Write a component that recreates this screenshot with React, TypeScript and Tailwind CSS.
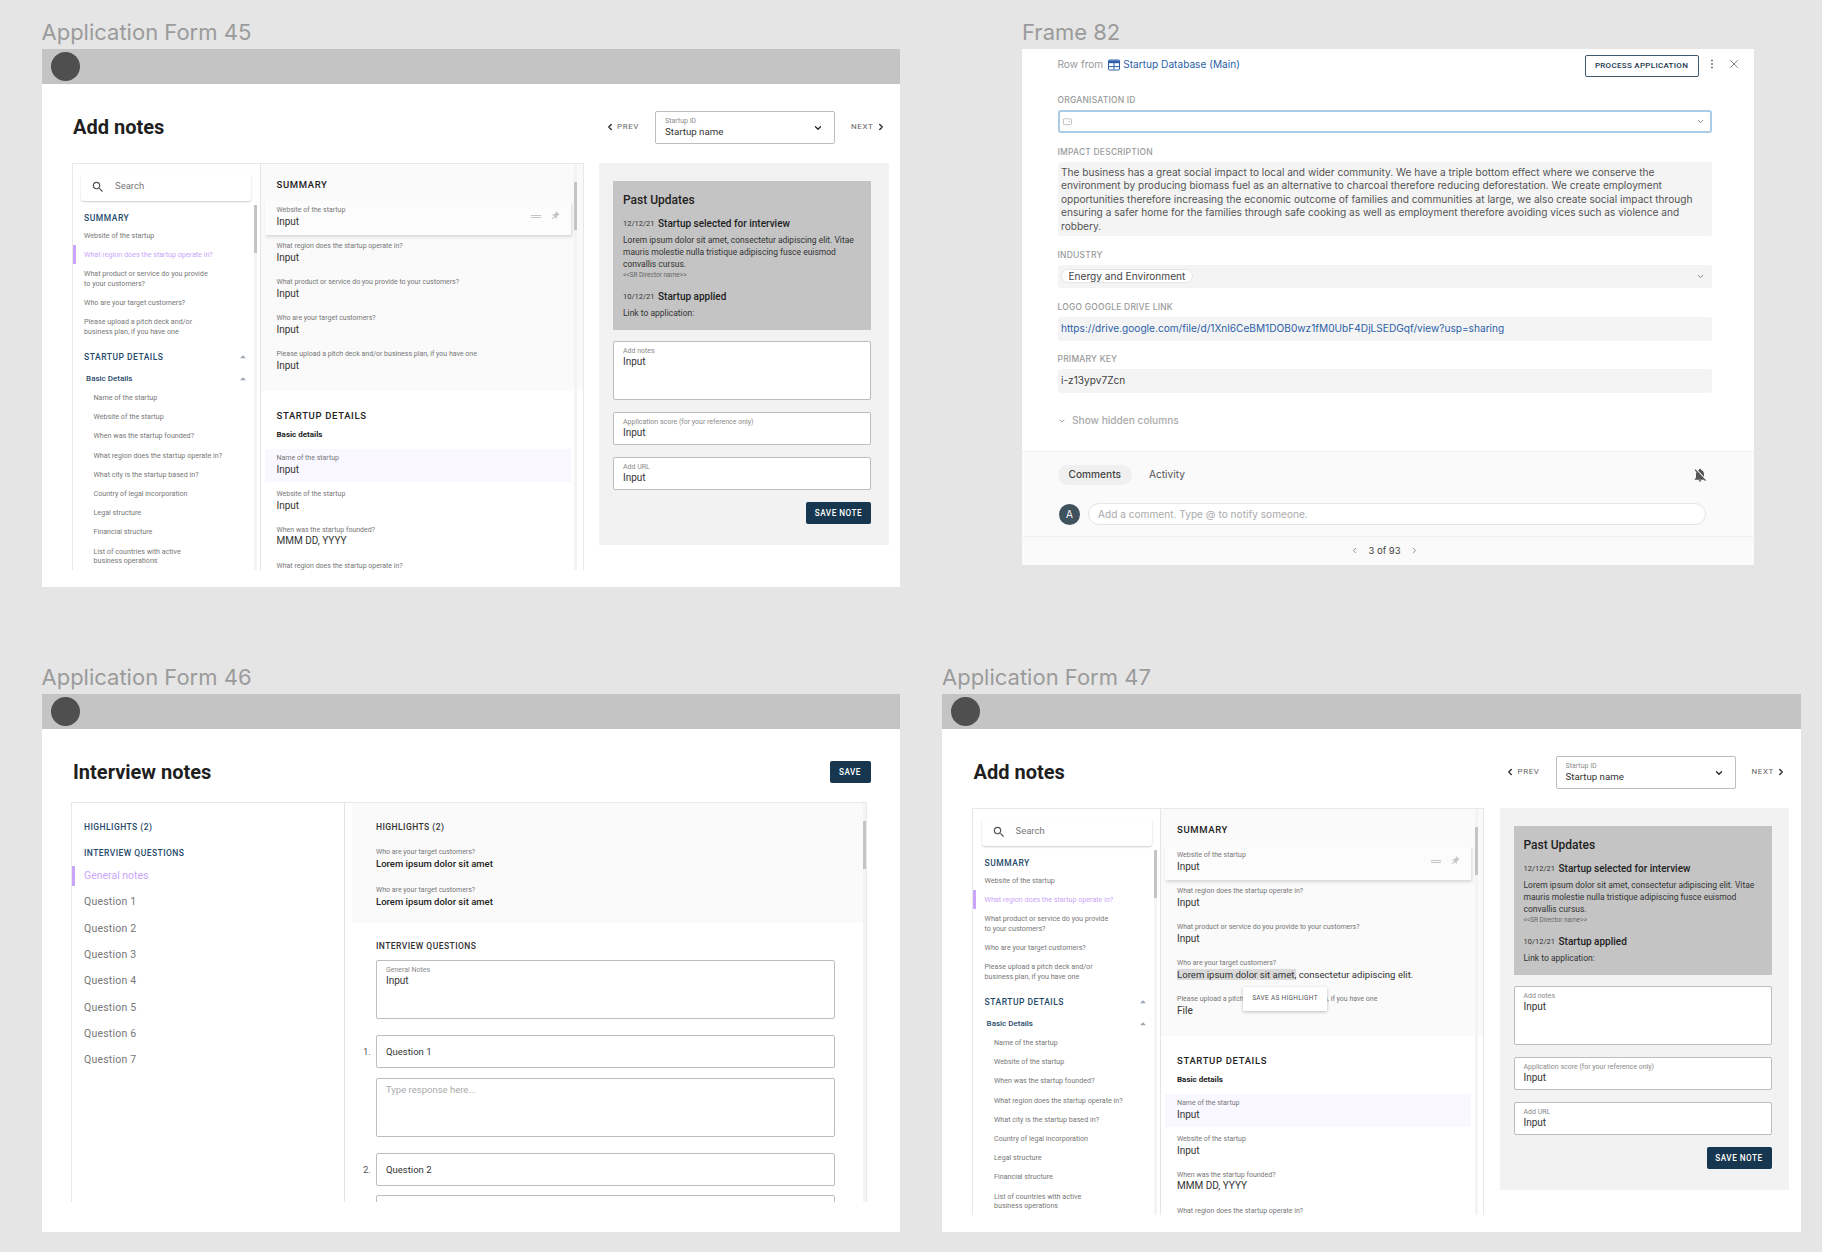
import { ChevronLeft, ChevronRight, ChevronDown, X, EllipsisVertical } from "lucide-react";
import { MdNotificationsOff, MdPushPin, MdArrowDropUp, MdSearch } from "react-icons/md";

const sidebarSummary = [
  "Website of the startup",
  "What region does the startup operate in?",
  "What product or service do you provide\nto your customers?",
  "Who are your target customers?",
  "Please upload a pitch deck and/or\nbusiness plan, if you have one",
];

const sidebarBasics = [
  "Name of the startup",
  "Website of the startup",
  "When was the startup founded?",
  "What region does the startup operate in?",
  "What city is the startup based in?",
  "Country of legal incorporation",
  "Legal structure",
  "Financial structure",
  "List of countries with active\nbusiness operations",
];

const questions = ["Question 1", "Question 2", "Question 3", "Question 4", "Question 5", "Question 6", "Question 7"];

const Frame = ({ title, children }: { title: string; children: React.ReactNode }) => (
  <div>
    <div className="h-[32px] text-[22px] leading-[31px] text-[#9b9b9b] font-['Inter',sans-serif] whitespace-nowrap">{title}</div>
    {children}
  </div>
);

const FormShell = ({ children }: { children: React.ReactNode }) => (
  <div className="w-[858.5px] h-[538px] bg-white overflow-hidden font-['Roboto',sans-serif]">
    <div className="h-[35px] bg-[#c4c4c4] flex items-center pl-[9px]">
      <div className="w-[29px] h-[29px] rounded-full bg-[#4f4f4f]" />
    </div>
    {children}
  </div>
);

const Field = ({ label, value, tall }: { label: string; value: string; tall?: boolean }) => (
  <div className={`border border-[#bdbdbd] rounded-[2px] bg-white px-[9px] pt-[4px] ${tall ? "h-[59px]" : "h-[33px]"}`}>
    <div className="text-[7px] leading-[10px] text-[#8a8a8a]">{label}</div>
    <div className="text-[10px] leading-[12px] text-[#333]">{value}</div>
  </div>
);

const Row = ({ label, value, shadow, tint, children }: { label: string; value: React.ReactNode; shadow?: boolean; tint?: boolean; children?: React.ReactNode }) => (
  <div className={`relative h-[33.6px] ml-[4px] w-[306px] pl-[12px] pt-[4.4px] ${shadow ? "bg-[#fcfcfc] shadow-[1px_2px_3px_rgba(0,0,0,0.14)]" : ""} ${tint ? "bg-[#f9f7ff]" : ""}`}>
    <div className="text-[7px] leading-[10px] text-[#777] whitespace-nowrap">{label}</div>
    <div className="text-[10px] leading-[12px] mt-[0.8px] text-[#333] whitespace-nowrap">{value}</div>
    {children}
  </div>
);

const SideItem = ({ text, active, sub }: { text: string; active?: boolean; sub?: boolean }) => (
  <div className={`relative text-[7.15px] leading-[9.6px] whitespace-pre ${sub ? "pl-[21px]" : "pl-[11.6px]"} ${active ? "text-[#c9a6fb]" : "text-[#777]"}`}>
    {active && <span className="absolute left-0 top-[-4.8px] w-[3px] h-[19.2px] bg-[#c9a6fb]" />}
    {text}
  </div>
);

const Caret = () => <MdArrowDropUp className="absolute right-[10px] top-[-1px] w-[14px] h-[14px] text-[#9aa7b3]" />;

const AddNotes = ({ selecting }: { selecting?: boolean }) => (
  <FormShell>
    <div className="h-[78.5px] pt-[8px] flex items-center pl-[31.5px]">
      <div className="text-[20px] font-bold text-[#1f1f1f]">Add notes</div>
      <div className="ml-auto flex items-center pr-[14.5px]">
        <ChevronLeft className="w-[10px] h-[10px] text-[#333]" strokeWidth={3.5} />
        <span className="ml-[2.5px] text-[8px] tracking-[0.6px] text-[#666]">PREV</span>
        <div className="relative ml-[16px] w-[180px] h-[33px] border border-[#bdbdbd] rounded-[2px] px-[9px] pt-[4px]">
          <div className="text-[7px] leading-[10px] text-[#8a8a8a]">Startup ID</div>
          <div className="text-[9.7px] leading-[12px] text-[#333]">Startup name</div>
          <ChevronDown className="absolute right-[11px] top-[11px] w-[10px] h-[10px] text-[#222]" strokeWidth={3} />
        </div>
        <span className="ml-[16px] text-[8px] tracking-[0.6px] text-[#666]">NEXT</span>
        <ChevronRight className="ml-[2px] w-[10px] h-[10px] text-[#333]" strokeWidth={3.5} />
      </div>
    </div>
    <div className="flex pl-[30px]">
      <div className="w-[512px] h-[407px] border-l border-t border-r border-[#e8e8e8] flex overflow-hidden">
        <div className="relative w-[188px] shrink-0 border-r border-[#e5e5e5]">
          <div className="mt-[9px] ml-[8.5px] w-[170px] h-[28px] rounded-[3px] shadow-[0_1px_2px_rgba(0,0,0,0.2)] flex items-center pl-[10px]">
            <MdSearch className="w-[14px] h-[14px] text-[#555]" />
            <span className="ml-[10px] text-[9.5px] text-[#777]">Search</span>
          </div>
          <div className="absolute right-[3px] top-[41px] bottom-0 w-[3px] bg-[#f4f4f4]" />
          <div className="absolute right-[3px] top-[41px] w-[3px] h-[48px] bg-[#c4c4c4]" />
          <div className="mt-[11px] pl-[11.6px] text-[8.5px] leading-[12px] font-medium tracking-[0.5px] text-[#264a6b]">SUMMARY</div>
          <div className="mt-[7.3px] flex flex-col gap-[9.6px]">
            {sidebarSummary.map((t, i) => (
              <SideItem key={t} text={t} active={i === 1} />
            ))}
          </div>
          <div className="relative mt-[14.6px] pl-[11.6px] text-[8.5px] leading-[12px] font-medium tracking-[0.5px] text-[#264a6b]">
            STARTUP DETAILS
            <Caret />
          </div>
          <div className="relative mt-[10px] pl-[13.6px] text-[8px] leading-[12px] font-medium text-[#264a6b]">
            Basic Details
            <Caret />
          </div>
          <div className="mt-[8.2px] flex flex-col gap-[9.6px]">
            {sidebarBasics.map((t) => (
              <SideItem key={t} text={t} sub />
            ))}
          </div>
        </div>
        <div className="relative flex-1 min-w-0">
          <div className="h-[227px] bg-[#fafafa] pt-[15px]">
            <div className="pl-[16px] text-[9.5px] leading-[12px] font-medium tracking-[0.65px] text-[#222]">SUMMARY</div>
            <div className="mt-[10.5px] flex flex-col gap-[2.3px]">
              <Row label="Website of the startup" value="Input" shadow>
                <div className="absolute right-[30px] top-[14px] w-[10px] h-[3px] border-y border-[#c4c4c4]" />
                <MdPushPin className="absolute right-[11px] top-[10px] w-[10px] h-[10px] text-[#c4c4c4] rotate-45" />
              </Row>
              <Row label="What region does the startup operate in?" value="Input" />
              <Row label="What product or service do you provide to your customers?" value="Input" />
              <Row
                label="Who are your target customers?"
                value={
                  selecting ? (
                    <span className="text-[9.6px]">
                      <span className="bg-[#d9d9d9]">Lorem ipsum dolor sit amet,</span> consectetur adipiscing elit.
                    </span>
                  ) : (
                    "Input"
                  )
                }
              />
              <Row label="Please upload a pitch deck and/or business plan, if you have one" value={selecting ? "File" : "Input"}>
                {selecting && (
                  <div className="absolute left-[78px] top-[-3px] w-[84px] h-[24px] bg-white shadow-[0_1px_3px_rgba(0,0,0,0.25)] flex items-center justify-center text-[6.5px] tracking-[0.3px] text-[#555] whitespace-nowrap">
                    SAVE AS HIGHLIGHT
                  </div>
                )}
              </Row>
            </div>
          </div>
          <div className="pt-[19px]">
            <div className="pl-[16px] text-[9.5px] leading-[12px] font-medium tracking-[0.65px] text-[#222]">STARTUP DETAILS</div>
            <div className="pl-[16px] mt-[7px] text-[8px] leading-[12px] font-bold text-[#222]">Basic details</div>
            <div className="mt-[8px] flex flex-col gap-[2.3px]">
              <Row label="Name of the startup" value="Input" tint />
              <Row label="Website of the startup" value="Input" />
              <Row label="When was the startup founded?" value="MMM DD, YYYY" />
              <Row label="What region does the startup operate in?" value="Input" />
            </div>
          </div>
          <div className="absolute right-[5.5px] top-0 bottom-0 w-[3px] bg-[#f4f4f4]" />
          <div className="absolute right-[5.5px] top-[18px] w-[3px] h-[48px] bg-[#c4c4c4]" />
        </div>
      </div>
      <div className="ml-[15.5px] w-[289.5px] h-[382px] bg-[#f2f2f2] pt-[18px] pl-[14px] pr-[17.5px]">
        <div className="h-[149px] bg-[#c4c4c4] pl-[10px] pt-[12px] text-[#222]">
          <div className="text-[12px] leading-[14px] font-medium">Past Updates</div>
          <div className="mt-[11px] flex items-center h-[12px]">
            <span className="w-[35px] text-[7.5px] text-[#333]">12/12/21</span>
            <span className="text-[10px] font-medium">Startup selected for interview</span>
          </div>
          <div className="mt-[4px] w-[240px] text-[8.5px] leading-[12px] text-[#333]">
            Lorem ipsum dolor sit amet, consectetur adipiscing elit. Vitae mauris molestie nulla tristique adipiscing fusce euismod convallis cursus.
          </div>
          <div className="text-[6.5px] leading-[10px] text-[#666]">&lt;&lt;SR Director name&gt;&gt;</div>
          <div className="mt-[11px] flex items-center h-[12px]">
            <span className="w-[35px] text-[7.5px] text-[#333]">10/12/21</span>
            <span className="text-[10px] font-medium">Startup applied</span>
          </div>
          <div className="mt-[4.5px] text-[8.5px] leading-[12px] text-[#333]">Link to application:</div>
        </div>
        <div className="mt-[11.5px] flex flex-col gap-[12px]">
          <Field label="Add notes" value="Input" tall />
          <Field label="Application score (for your reference only)" value="Input" />
          <Field label="Add URL" value="Input" />
        </div>
        <div className="mt-[12px] flex justify-end">
          <button className="w-[65px] h-[21.5px] bg-[#17364f] rounded-[2px] text-white text-[8.2px] font-medium tracking-[0.5px]">SAVE NOTE</button>
        </div>
      </div>
    </div>
  </FormShell>
);

const InterviewNotes = () => (
  <FormShell>
    <div className="h-[73px] pt-[13px] flex items-center pl-[31.5px] pr-[29.5px]">
      <div className="text-[20px] font-bold text-[#1f1f1f]">Interview notes</div>
      <button className="ml-auto w-[41px] h-[21.5px] bg-[#17364f] rounded-[2px] text-white text-[8.2px] font-medium tracking-[0.5px]">SAVE</button>
    </div>
    <div className="ml-[29.5px] w-[796px] h-[400px] border border-b-0 border-[#e8e8e8] flex overflow-hidden">
      <div className="w-[273px] shrink-0 border-r border-[#e5e5e5] pt-[18px]">
        <div className="pl-[12px] text-[8.5px] leading-[12px] font-medium tracking-[0.45px] text-[#264a6b]">HIGHLIGHTS (2)</div>
        <div className="pl-[12px] mt-[13.5px] text-[8.5px] leading-[12px] font-medium tracking-[0.45px] text-[#264a6b]">INTERVIEW QUESTIONS</div>
        <div className="mt-[7.5px] flex flex-col gap-[6.3px]">
          <div className="relative h-[20px] pl-[12px] flex items-center text-[10.5px] text-[#c9a6fb]">
            <span className="absolute left-0 top-0 w-[3px] h-[20px] bg-[#c9a6fb]" />
            General notes
          </div>
          {questions.map((q) => (
            <div key={q} className="h-[20px] pl-[12px] flex items-center text-[10.5px] tracking-[0.2px] text-[#777]">{q}</div>
          ))}
        </div>
      </div>
      <div className="relative flex-1 min-w-0 pl-[6.5px]">
        <div className="h-[120px] bg-[#fafafa] pl-[24.5px] pt-[18px]">
          <div className="text-[8.5px] leading-[12px] font-medium tracking-[0.45px] text-[#333]">HIGHLIGHTS (2)</div>
          <div className="mt-[14px] text-[7px] leading-[10px] text-[#777]">Who are your target customers?</div>
          <div className="mt-[0.7px] text-[9.5px] leading-[12px] font-medium text-[#222]">Lorem ipsum dolor sit amet</div>
          <div className="mt-[15.3px] text-[7px] leading-[10px] text-[#777]">Who are your target customers?</div>
          <div className="mt-[0.7px] text-[9.5px] leading-[12px] font-medium text-[#222]">Lorem ipsum dolor sit amet</div>
        </div>
        <div className="pl-[24.5px] pr-[31.5px] pt-[17px]">
          <div className="text-[8.5px] leading-[12px] font-medium tracking-[0.45px] text-[#333]">INTERVIEW QUESTIONS</div>
          <div className="mt-[8px]">
            <Field label="General Notes" value="Input" tall />
          </div>
          <div className="relative mt-[16.3px] h-[33px] border border-[#bdbdbd] rounded-[2px] pl-[9px] pt-[1px] flex items-center text-[9.5px] text-[#333]">
            <span className="absolute left-[-14px] top-[9px] text-[9.5px] text-[#555]">1.</span>
            Question 1
          </div>
          <div className="mt-[9.3px] h-[59.4px] border border-[#bdbdbd] rounded-[2px] pl-[9px] pt-[4px] text-[9.5px] leading-[13px] text-[#aaa]">Type response here...</div>
          <div className="relative mt-[16px] h-[33px] border border-[#bdbdbd] rounded-[2px] pl-[9px] pt-[1px] flex items-center text-[9.5px] text-[#333]">
            <span className="absolute left-[-14px] top-[9px] text-[9.5px] text-[#555]">2.</span>
            Question 2
          </div>
          <div className="mt-[9.3px] h-[33px] border border-[#bdbdbd] rounded-[2px]" />
        </div>
        <div className="absolute right-[0.5px] top-0 bottom-0 w-[3px] bg-[#f4f4f4]" />
        <div className="absolute right-[0.5px] top-[18px] w-[3px] h-[48px] bg-[#c4c4c4]" />
      </div>
    </div>
  </FormShell>
);

const DbLabel = ({ children }: { children: React.ReactNode }) => (
  <div className="h-[12px] text-[8.5px] leading-[12px] font-medium text-[#9a9a9a] tracking-[0.2px]">{children}</div>
);

const DbBox = ({ children, className }: { children: React.ReactNode; className?: string }) => (
  <div className={`mt-[4px] mb-[12.7px] bg-[#f4f4f4] rounded-[3px] px-[3.5px] text-[10.15px] text-[#444] flex items-center h-[23.6px] ${className ?? ""}`}>{children}</div>
);

const RowDetail = () => (
  <div className="w-[732px] h-[515.5px] bg-white font-['Inter',sans-serif] flex flex-col">
    <div className="h-[44.7px] flex items-start pl-[35.5px] pr-[13.5px]">
      <div className="mt-[9.5px] flex items-center h-[12px] text-[10.15px] text-[#999]">
        Row from
        <svg viewBox="0 0 12 12" className="ml-[5px] w-[12px] h-[12px]">
          <rect x="0.5" y="1" width="11" height="10" rx="1" fill="#fff" stroke="#2d5fa8" strokeWidth="1" />
          <path d="M0.5 1.5h11v2.7h-11z" fill="#2d5fa8" />
          <path d="M1 7.6h10M6 4v6.5" stroke="#2d5fa8" strokeWidth="1" fill="none" />
        </svg>
        <span className="ml-[3px] text-[#2d5fa8]">Startup Database (Main)</span>
      </div>
      <button className="ml-auto mt-[6.3px] w-[114px] h-[21.4px] border border-[#3d5a73] rounded-[2px] text-[8px] font-medium font-['Roboto',sans-serif] tracking-[0.3px] text-[#17364f]">PROCESS APPLICATION</button>
      <EllipsisVertical className="mt-[9px] ml-[7px] w-[12px] h-[12px] text-[#777]" strokeWidth={2.2} />
      <X className="mt-[8px] ml-[9px] w-[14px] h-[14px] text-[#666]" strokeWidth={1.4} />
    </div>
    <div className="pl-[35.5px] pr-[42px]">
      <DbLabel>ORGANISATION ID</DbLabel>
      <div className="mt-[4px] mb-[13px] h-[23.3px] rounded-[3px] border-2 border-[#a9cde8] flex items-center px-[3px]">
        <svg viewBox="0 0 10 10" className="w-[9px] h-[9px]">
          <rect x="0.5" y="2" width="9" height="6.5" rx="1" stroke="#aaa" fill="none" strokeWidth="0.8" />
          <circle cx="7" cy="5.2" r="0.7" fill="#aaa" />
        </svg>
        <ChevronDown className="ml-auto mr-[2px] w-[9px] h-[9px] text-[#777]" strokeWidth={2.4} />
      </div>
      <DbLabel>IMPACT DESCRIPTION</DbLabel>
      <DbBox className="!h-[74px] !items-start pt-[4px] pr-[14px] !text-[#555]">
        <div className="leading-[13.4px]">
          The business has a great social impact to local and wider community. We have a triple bottom effect where we conserve the environment by producing biomass fuel as an alternative to charcoal therefore reducing deforestation. We create employment opportunities therefore increasing the economic outcome of families and communities at large, we also create social impact through ensuring a safer home for the families through safe cooking as well as employment therefore avoiding vices such as violence and robbery.
        </div>
      </DbBox>
      <DbLabel>INDUSTRY</DbLabel>
      <DbBox>
        <span className="h-[14px] px-[6.5px] rounded-full bg-white border border-[#e5e5e5] flex items-center text-[#444]">Energy and Environment</span>
        <ChevronDown className="ml-auto mr-[3.5px] w-[9px] h-[9px] text-[#777]" strokeWidth={2.4} />
      </DbBox>
      <DbLabel>LOGO GOOGLE DRIVE LINK</DbLabel>
      <DbBox>
        <span className="text-[#2d5fa8]">https://drive.google.com/file/d/1Xnl6CeBM1DOB0wz1fM0UbF4DjLSEDGqf/view?usp=sharing</span>
      </DbBox>
      <DbLabel>PRIMARY KEY</DbLabel>
      <DbBox>i-z13ypv7Zcn</DbBox>
      <div className="mt-[22px] h-[12px] flex items-center text-[10.15px] font-medium text-[#aaa]">
        <ChevronDown className="w-[8px] h-[8px] text-[#888]" strokeWidth={2.5} />
        <span className="ml-[6.5px]">Show hidden columns</span>
      </div>
    </div>
    <div className="mt-auto h-[114px] border-t border-[#f0f0f0] bg-[#fafafa] flex flex-col">
      <div className="mt-[13px] flex items-center pl-[35.5px] pr-[46px]">
        <span className="h-[20.6px] w-[74.5px] rounded-full bg-[#f0f0f0] flex items-center justify-center text-[10.15px] font-medium text-[#444]">Comments</span>
        <span className="ml-[17px] text-[10.15px] text-[#555]">Activity</span>
        <MdNotificationsOff className="ml-auto w-[16px] h-[16px] text-[#555]" />
      </div>
      <div className="mt-[18.2px] flex items-center pl-[37px] pr-[48px]">
        <div className="w-[21px] h-[21px] rounded-full bg-[#41525f] text-white text-[10px] flex items-center justify-center shrink-0">A</div>
        <div className="ml-[8px] flex-1 h-[22px] rounded-full bg-white border border-[#e5e5e5] pl-[9px] flex items-center text-[10.15px] text-[#aaa]">Add a comment. Type @ to notify someone.</div>
      </div>
      <div className="mt-[10.5px] flex-1 border-t border-[#f0f0f0] flex items-center justify-center pr-[7px] text-[9.5px] text-[#444]">
        <ChevronLeft className="w-[9px] h-[9px] text-[#666]" strokeWidth={1.8} />
        <span className="mx-[9.5px]">3 of 93</span>
        <ChevronRight className="w-[9px] h-[9px] text-[#666]" strokeWidth={1.8} />
      </div>
    </div>
  </div>
);

export default function App() {
  return (
    <div className="w-[1822px] h-[1252px] bg-[#e5e5e5] overflow-hidden pl-[41.5px]">
      <div className="flex pt-[17px] gap-[122px]">
        <Frame title="Application Form 45">
          <AddNotes />
        </Frame>
        <Frame title="Frame 82">
          <RowDetail />
        </Frame>
      </div>
      <div className="flex mt-[75px] gap-[42px]">
        <Frame title="Application Form 46">
          <InterviewNotes />
        </Frame>
        <Frame title="Application Form 47">
          <AddNotes selecting />
        </Frame>
      </div>
    </div>
  );
}
